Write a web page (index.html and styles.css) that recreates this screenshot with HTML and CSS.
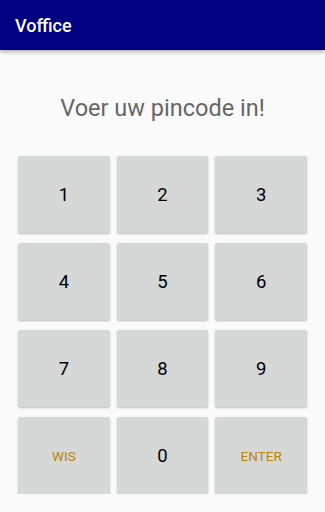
FILE: index.html
```html
<!DOCTYPE html>
<html lang="nl">
<head>
  <meta charset="UTF-8">
  <meta name="viewport" content="width=device-width, initial-scale=1.0">
  <title>Voffice</title>
  <link rel="stylesheet" href="styles.css">
</head>
<body>

<header class="app-bar">Voffice</header>

<main class="pin-screen">
  <div class="pin-title">Voer uw pincode in!</div>
  <div class="keypad">
    <button class="key">1</button>
    <button class="key">2</button>
    <button class="key">3</button>
    <button class="key">4</button>
    <button class="key">5</button>
    <button class="key">6</button>
    <button class="key">7</button>
    <button class="key">8</button>
    <button class="key">9</button>
    <button class="key action">WIS</button>
    <button class="key">0</button>
    <button class="key action">ENTER</button>
  </div>
</main>

</body>
</html>
```

FILE: styles.css
```css
body {
  font-family: Roboto, "Noto Sans", sans-serif;
  margin: 0;
  background: #fafafa;
}

.app-bar {
  height: 50px;
  background: #000080;
  color: white;
  font-size: 18px;
  font-weight: 500;
  padding-left: 15px;
  display: flex;
  align-items: center;
  box-shadow: 0 2px 4px rgba(0, 0, 0, 0.3);
  position: relative;
}

.pin-screen {
  padding: 0 18px;
}

.pin-title {
  text-align: center;
  font-size: 23.5px;
  color: #666;
  padding-top: 43px;
  height: 63px;
  line-height: 30px;
}

.keypad {
  display: grid;
  grid-template-columns: repeat(3, 1fr);
  grid-auto-rows: 77px;
  column-gap: 7px;
  row-gap: 10px;
}

.key {
  border: none;
  border-radius: 2px;
  background: #d6d7d7;
  box-shadow: 0 1px 2px rgba(0, 0, 0, 0.25);
  font-family: inherit;
  font-size: 18.5px;
  color: #000;
  padding: 0;
}

.key.action {
  font-size: 13.5px;
  color: #b8860b;
}
```
